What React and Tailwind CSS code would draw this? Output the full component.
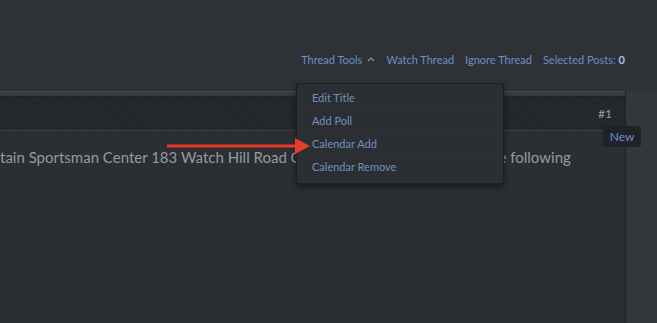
import React from "react";

const links = ["Watch Thread", "Ignore Thread"];
const menuItems = ["Edit Title", "Add Poll", "Calendar Add", "Calendar Remove"];

const App = () => {
  return (
    <div
      className="relative w-[657px] h-[323px] overflow-hidden bg-[#2e3236] flex flex-col"
      style={{ fontFamily: "Lato, 'Open Sans', sans-serif" }}
    >
      {/* thread toolbar */}
      <div className="h-[91px] flex items-end justify-end pr-[32px] pb-[23px] text-[11px] text-[#6d8fc4]">
        <div className="flex items-center gap-[11px]">
          <span className="flex items-center gap-[5px]">
            Thread Tools
            <svg width="8" height="6" viewBox="0 0 8 6" className="mt-[-1px]">
              <polyline points="1,5 4,2 7,5" fill="none" stroke="#8a9bb3" strokeWidth="1.1" />
            </svg>
          </span>
          {links.map(l => (
            <span key={l}>{l}</span>
          ))}
          <span>
            Selected Posts: <b className="text-[#a9c3e8]">0</b>
          </span>
        </div>
      </div>

      <div className="flex flex-1">
        {/* post panel */}
        <div className="w-[626px] flex flex-col border-r border-[#1f2225] bg-[#2b2f33]">
          <div className="h-[6px] border-t border-[#44484d] bg-[#373b3f] border-b border-b-[#202326]" />
          <div className="h-[34px] flex items-center justify-end pr-[13px] border-b border-[#3a3e42] bg-[#26292c] bg-[repeating-linear-gradient(45deg,#282b2e_0px,#282b2e_1px,#242729_1px,#242729_3px)] text-[12px] text-[#9a9ea3]">
            #1
          </div>
          <p className="pt-[15px] text-[15px] text-[#959a9f] whitespace-nowrap">
            tain Sportsman Center 183 Watch Hill Road Co
            <span className="tracking-[-0.4px]">rtlandt Manor NY 10567 on th</span>e following
          </p>
        </div>
        <div className="flex-1 bg-[#33373b]" />
      </div>

      {/* "New" tooltip */}
      <div className="absolute left-[603px] top-[126px] w-[38px] h-[21px] rounded-[3px] bg-[#1f2226] flex items-center justify-center text-[12px] text-[#6d8fd2]">
        New
      </div>

      {/* thread tools menu */}
      <div className="absolute left-[296px] top-[83px] w-[208px] h-[101px] rounded-[3px] border border-[#1c1f22] bg-[#2b2f33] shadow-[0_3px_6px_rgba(0,0,0,0.45)] py-[3px] text-[11px] text-[#7190bb]">
        {menuItems.map((item, i) => (
          <div
            key={item}
            className={"h-[23px] flex items-center px-[15px]" + (i < menuItems.length - 1 ? " border-b border-[#2e3236]" : "")}
          >
            {item}
          </div>
        ))}
      </div>

      {/* red annotation arrow */}
      <svg className="absolute left-[160px] top-[135px]" width="155" height="22" viewBox="0 0 155 22">
        <line x1="7" y1="11" x2="137" y2="11" stroke="#e63b26" strokeWidth="3" />
        <polygon points="135,3 150,11 135,19" fill="#e63b26" />
      </svg>
    </div>
  );
};

export default App;
